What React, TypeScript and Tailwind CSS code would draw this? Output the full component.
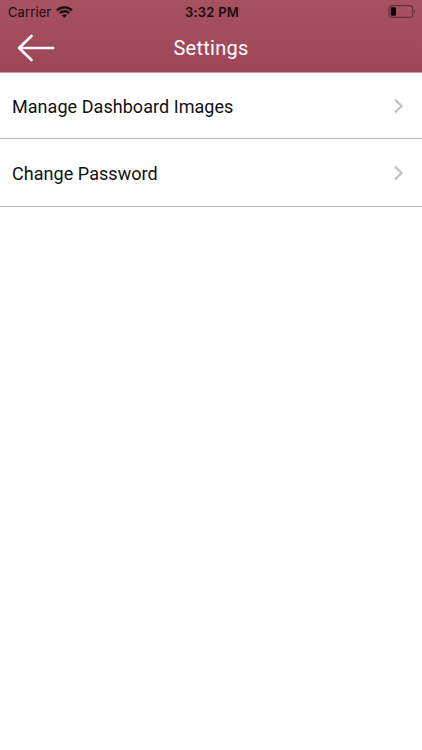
interface SettingsRowProps {
  label: string;
}

const rows = ["Manage Dashboard Images", "Change Password"];

function WifiIcon() {
  return (
    <svg width="17" height="12" viewBox="0 0 17 12" fill="none" stroke="#1c0a0e" strokeWidth="2.3">
      <path d="M1 4.3C5.2 .3 11.8 .3 16 4.3" />
      <path d="M3.7 7.2C6.4 4.6 10.6 4.6 13.3 7.2" />
      <path d="M8.5 11.8 5.9 9.2C7.4 7.9 9.6 7.9 11.1 9.2Z" fill="#1c0a0e" stroke="none" />
    </svg>
  );
}

function BatteryIcon() {
  return (
    <svg width="28" height="13" viewBox="0 0 28 13" fill="none">
      <rect x=".9" y=".6" width="23.8" height="11.8" rx="3.2" stroke="#6c2c3a" strokeWidth="1.1" />
      <rect x="2.8" y="2.3" width="5.2" height="8.4" rx="1.2" fill="#080204" />
      <path d="M26 4.5C27.5 5 27.5 8 26 8.5Z" fill="#6c2c3a" />
    </svg>
  );
}

function StatusBar() {
  return (
    <div className="grid h-6 grid-cols-3 items-center pl-2 pr-1.5 text-[#1c0a0e]">
      <div className="flex items-center gap-[5px]">
        <span className="pt-px text-[13px] tracking-[0.1px]">Carrier</span>
        <WifiIcon />
      </div>
      <span className="pt-px text-center text-[13px] font-semibold tracking-[0.25px]">3:32 PM</span>
      <div className="flex justify-end pb-px">
        <BatteryIcon />
      </div>
    </div>
  );
}

function SettingsRow({ label }: SettingsRowProps) {
  return (
    <button
      type="button"
      className="flex w-full items-center justify-between border-b border-[#bcbcbc] pl-3 pr-[18px] pt-px text-left"
    >
      <span className="text-[18px] tracking-[0.05px] text-[#111111]">{label}</span>
      <svg width="11" height="16" viewBox="0 0 11 16" fill="none" stroke="#c3c3c3" strokeWidth="2.2">
        <path d="M2 1.6 8.6 8 2 14.4" />
      </svg>
    </button>
  );
}

export default function App() {
  return (
    <div className="flex h-[750px] w-[422px] flex-col bg-white">
      <header className="h-[73px] border-b border-[#c99ba5] bg-linear-to-b from-[#a85162] to-[#9c4556] font-[Inter,sans-serif]">
        <StatusBar />
        {/* Equal side columns keep the title centred */}
        <div className="grid h-[47px] grid-cols-[1fr_auto_1fr] items-center pl-[17px] pr-[17px]">
          <button type="button" aria-label="Back">
            <svg width="38" height="28" viewBox="0 0 38 28" fill="none" stroke="white" strokeWidth="2.6" strokeLinecap="round" strokeLinejoin="round">
              <path d="M14.5 2 2 14 14.5 26M2 14H36" />
            </svg>
          </button>
          <h1 className="font-[Roboto,sans-serif] text-[20px] tracking-[0.25px] text-white">Settings</h1>
        </div>
      </header>

      <main className="grid grid-rows-[66px_68px] font-[Roboto,sans-serif]">
        {rows.map((label) => (
          <SettingsRow key={label} label={label} />
        ))}
      </main>
    </div>
  );
}
